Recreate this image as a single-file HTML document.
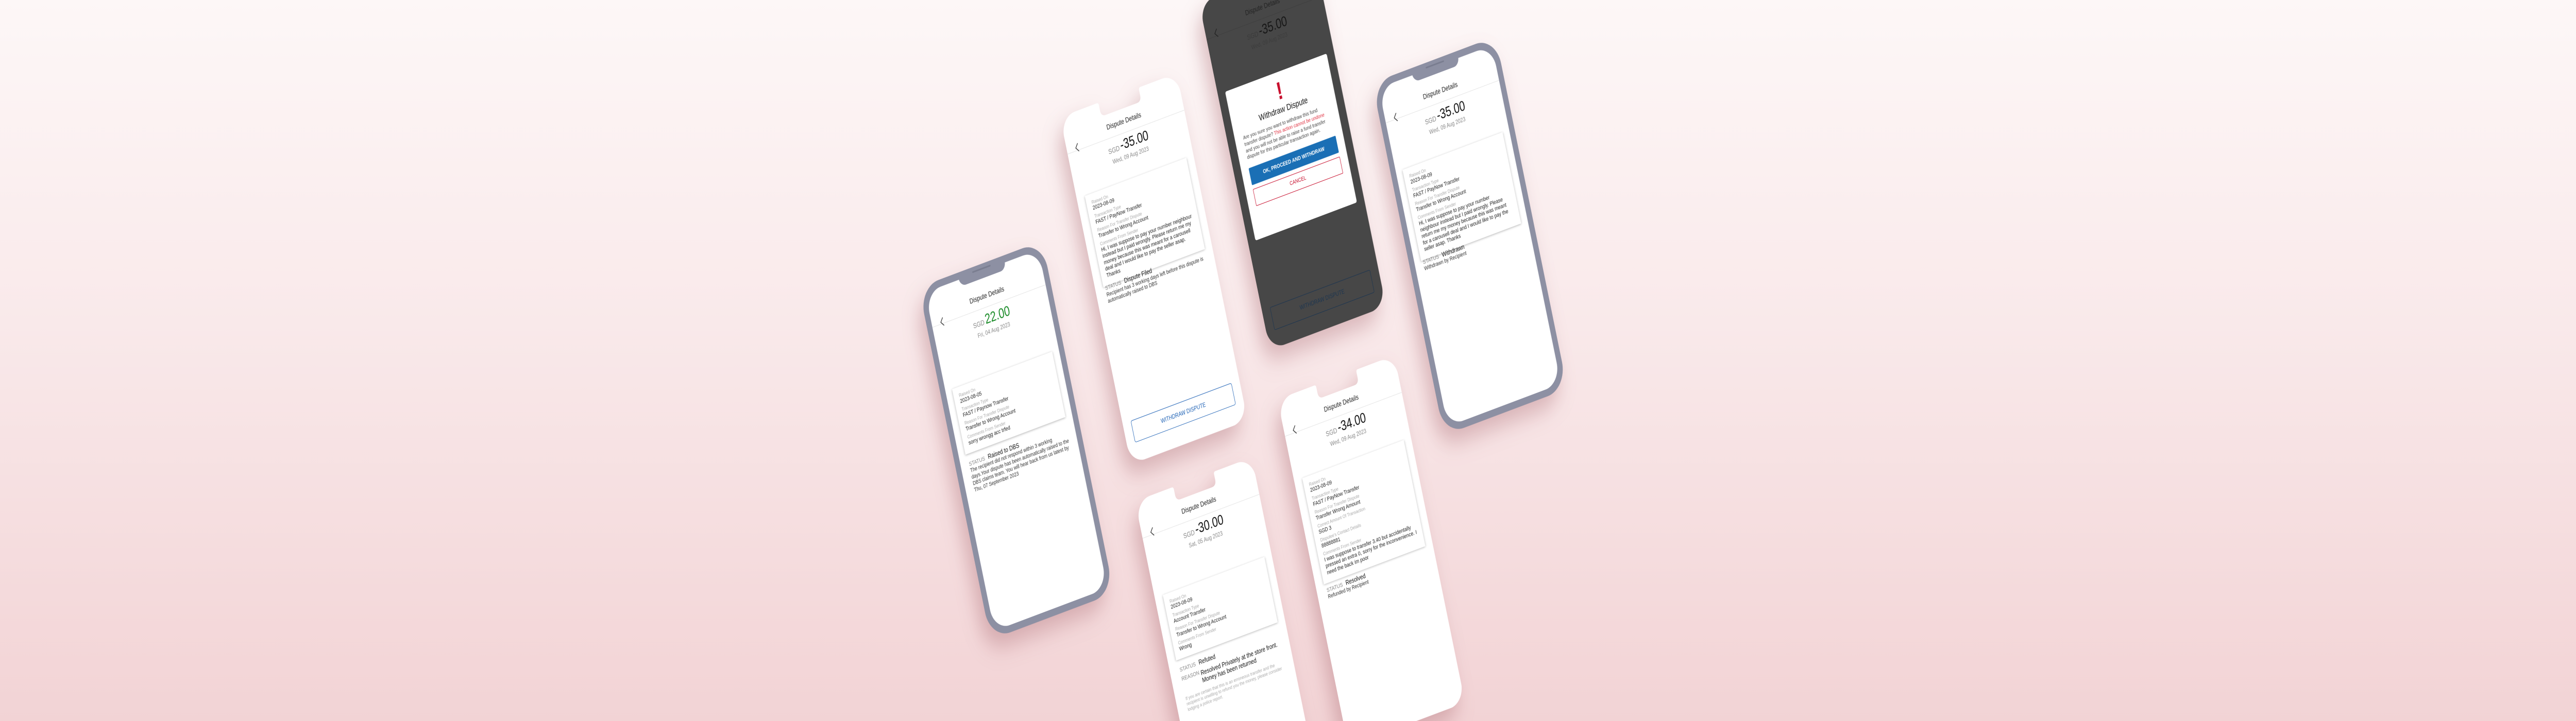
<!DOCTYPE html>
<html><head><meta charset="utf-8"><style>
*{margin:0;padding:0;box-sizing:border-box}
html,body{overflow:hidden;background:#f2d3d5}
#wrap{position:absolute;left:0;top:0;width:6800px;height:1400px;overflow:hidden;transform-origin:0 0;background:linear-gradient(180deg,#fdf7f7 0%,#f9e9ea 45%,#f2d3d5 100%);font-family:"Liberation Sans",sans-serif}
.ph{position:absolute;transform:rotate(-15.5deg);filter:drop-shadow(-18px 22px 22px rgba(165,100,108,.38))}
.wscr{position:absolute;inset:0;background:#fff;clip-path:path("M40,0 H100 Q105,0 105,5 V16 Q105,28 118,28 H202 Q215,28 215,16 V5 Q215,0 220,0 H280 A40 40 0 0 1 320 40 V660 A40 40 0 0 1 280 700 H40 A40 40 0 0 1 0 660 V40 A40 40 0 0 1 40 0 Z");overflow:hidden}
.frame{position:absolute;inset:0;background:#8d90a3;border-radius:54px}
.fscr{position:absolute;left:14px;top:14px;right:14px;bottom:14px;background:#fff;border-radius:42px;overflow:hidden}
.notch{position:absolute;left:50%;top:0;width:126px;height:28px;margin-left:-63px;background:#8d90a3;border-radius:0 0 16px 16px}
.notch:after{content:"";position:absolute;left:38px;top:8px;width:50px;height:3px;border-radius:2px;background:#7a7d90}
.hdr{position:absolute;left:0;right:0;top:44px;text-align:center;font-size:14px;color:#222}
.ln{position:absolute;left:0;right:0;top:74px;height:1px;background:#e4e4e4}
.bk{position:absolute;left:20px;top:58px;width:16px;height:22px}
.amt{position:absolute;left:0;right:0;top:80px;text-align:center;color:#111;font-size:27px}
.amt small{font-size:14px;color:#888;margin-right:3px}
.dt{position:absolute;left:0;right:0;top:114px;text-align:center;font-size:12px;color:#888}
.card{position:absolute;left:22px;right:20px;background:#fff;box-shadow:0 1px 5px rgba(0,0,0,.3);padding:12px 14px 12px}
.lb{font-size:9.5px;color:#aaa;line-height:11px;margin-top:4px}
.lb:first-child{margin-top:0}
.vl{font-size:11.5px;color:#222;line-height:13px}
.st{position:absolute;left:26px;right:18px;font-size:11px;color:#333;line-height:13px}
.st .k{color:#888;font-size:11.5px;display:inline-block;width:52px}
.st .t{font-size:13px;color:#111}
.wbtn{position:absolute;left:22px;right:22px;bottom:38px;height:44px;border:1.5px solid #1a5fb4;border-radius:4px;color:#1a5fb4;text-align:center;line-height:42px;font-size:12px}
</style></head><body><div id="wrap">

<div class="ph" style="left:2514px;top:500px;width:338px;height:710px">
 <div class="frame"></div>
 <div class="fscr">
  <div class="hdr" style="top:40px">Dispute Details</div><div class="ln" style="top:70px"></div>
  <svg class="bk" style="top:56px" viewBox="0 0 16 22"><path d="M11 3 L4 11 L11 19" fill="none" stroke="#333" stroke-width="1.6"/></svg>
  <div class="amt" style="top:78px"><small>SGD</small><span style="color:#178a25">22.00</span></div>
  <div class="dt" style="top:112px">Fri, 04 Aug 2023</div>
  <div class="card" style="top:200px;left:18px;right:18px">
   <div class="lb">Raised On</div><div class="vl">2023-08-05</div>
   <div class="lb">Transaction Type</div><div class="vl">FAST / Paynow Transfer</div>
   <div class="lb">Reason For Transfer Dispute</div><div class="vl">Transfer to Wrong Account</div>
   <div class="lb">Comments From Sender</div><div class="vl">sorry wrongg acc trfed</div>
  </div>
  <div class="st" style="top:345px;left:22px"><span class="k">STATUS</span><span class="t">Raised to DBS</span><br>The recipient did not respond within 3 working days.Your dispute has been automatically raised to the DBS claims team. You will hear back from us latest by Thu, 07 September 2023</div>
 </div>
 <div class="notch"></div>
</div>

<div class="ph" style="left:2886px;top:172px;width:320px;height:700px">
 <div class="wscr">
  <div class="hdr">Dispute Details</div><div class="ln"></div>
  <svg class="bk" viewBox="0 0 16 22"><path d="M11 3 L4 11 L11 19" fill="none" stroke="#333" stroke-width="1.6"/></svg>
  <div class="amt"><small>SGD</small>-35.00</div>
  <div class="dt">Wed, 09 Aug 2023</div>
  <div class="card" style="top:165px">
   <div class="lb">Raised On</div><div class="vl">2023-08-09</div>
   <div class="lb">Transaction Type</div><div class="vl">FAST / PayNow Transfer</div>
   <div class="lb">Reason For Transfer Dispute</div><div class="vl">Transfer to Wrong Account</div>
   <div class="lb">Comments From Sender</div><div class="vl">Hi, I was suppose to pay your number neighbour instead but I paid wrongly. Please return me my money because this was meant for a carousell deal and I would like to pay the seller asap. Thanks</div>
  </div>
  <div class="st" style="top:345px"><span class="k">STATUS</span><span class="t">Dispute Filed</span><br>Recipient has 3 working days left before this dispute is automatically raised to DBS</div>
  <div class="wbtn">WITHDRAW DISPUTE</div>
 </div>
</div>

<div class="ph" style="left:3253px;top:-50px;width:318px;height:700px">
 <div style="position:absolute;inset:0;background:#474747;border-radius:40px;overflow:hidden">
  <div class="hdr" style="color:#222">Dispute Details</div>
  <div class="ln" style="background:#3f3f3f"></div>
  <svg class="bk" viewBox="0 0 16 22"><path d="M11 3 L4 11 L11 19" fill="none" stroke="#222" stroke-width="1.6"/></svg>
  <div class="amt" style="color:#161616"><small style="color:#3a3a3a">SGD</small>-35.00</div>
  <div class="dt" style="color:#3c3c3c">Wed, 09 Aug 2023</div>
  <div style="position:absolute;left:20px;right:20px;top:185px;height:300px;background:#fff;border-radius:4px;text-align:center">
   <div style="color:#c8102e;font-size:48px;font-weight:bold;line-height:48px;margin-top:14px">!</div>
   <div style="font-size:17px;color:#111;margin-top:2px">Withdraw Dispute</div>
   <div style="font-size:10.5px;color:#444;line-height:13px;margin:10px 22px 0;text-align:left">Are you sure you want to withdraw this fund transfer dispute? <span style="color:#e03040">This action cannot be undone</span> and you will not be able to raise a fund transfer dispute for this particular transaction again.</div>
   <div style="margin:14px 20px 0;height:34px;background:#1a6fb5;color:#fff;font-size:11px;font-weight:bold;line-height:34px;border-radius:2px">OK, PROCEED AND WITHDRAW</div>
   <div style="margin:8px 20px 0;height:34px;border:1.5px solid #c8102e;color:#c8102e;font-size:11px;line-height:31px;border-radius:2px">CANCEL</div>
  </div>
  <div style="position:absolute;left:22px;right:22px;bottom:34px;height:46px;border:1.5px solid #1c3550;color:#1c3550;text-align:center;line-height:43px;font-size:12px;border-radius:3px">WITHDRAW DISPUTE</div>
 </div>
</div>

<div class="ph" style="left:3711px;top:103px;width:338px;height:710px">
 <div class="frame"></div>
 <div class="fscr">
  <div class="hdr" style="top:40px">Dispute Details</div><div class="ln" style="top:70px"></div>
  <svg class="bk" style="top:56px" viewBox="0 0 16 22"><path d="M11 3 L4 11 L11 19" fill="none" stroke="#333" stroke-width="1.6"/></svg>
  <div class="amt" style="top:78px"><small>SGD</small>-35.00</div>
  <div class="dt" style="top:112px">Wed, 09 Aug 2023</div>
  <div class="card" style="top:170px;left:18px;right:18px">
   <div class="lb">Raised On</div><div class="vl">2023-08-09</div>
   <div class="lb">Transaction Type</div><div class="vl">FAST / PayNow Transfer</div>
   <div class="lb">Reason For Transfer Dispute</div><div class="vl">Transfer to Wrong Account</div>
   <div class="lb">Comments From Sender</div><div class="vl">Hi, I was suppose to pay your number neighbour instead but I paid wrongly. Please return me my money because this was meant for a carousell deal and I would like to pay the seller asap. Thanks</div>
  </div>
  <div class="st" style="top:350px;left:22px"><span class="k">STATUS</span><span class="t">Withdrawn</span><br>Withdrawn by Recipient</div>
 </div>
 <div class="notch"></div>
</div>

<div class="ph" style="left:3084px;top:918px;width:320px;height:700px">
 <div class="wscr">
  <div class="hdr">Dispute Details</div><div class="ln"></div>
  <svg class="bk" viewBox="0 0 16 22"><path d="M11 3 L4 11 L11 19" fill="none" stroke="#333" stroke-width="1.6"/></svg>
  <div class="amt"><small>SGD</small>-30.00</div>
  <div class="dt">Sat, 05 Aug 2023</div>
  <div class="card" style="top:195px">
   <div class="lb">Raised On</div><div class="vl">2023-08-09</div>
   <div class="lb">Transaction Type</div><div class="vl">Account Transfer</div>
   <div class="lb">Reason For Transfer Dispute</div><div class="vl">Transfer to Wrong Account</div>
   <div class="lb">Comments From Sender</div><div class="vl">Wrong</div>
  </div>
  <div class="st" style="top:340px"><span class="k">STATUS</span><span class="t">Refuted</span></div>
  <div class="st" style="top:360px"><span class="k" style="float:left">REASON</span><div style="margin-left:52px;font-size:13px;color:#111;line-height:15px">Resolved Privately at the store front. Money has been returned</div></div>
  <div class="st" style="top:400px;font-size:9.5px;color:#aaa;line-height:11px">If you are certain that this is an erroneous transfer and the recipient is unwilling to refund you the money, please consider lodging a police report.</div>
 </div>
</div>

<div class="ph" style="left:3460px;top:720px;width:320px;height:700px">
 <div class="wscr">
  <div class="hdr">Dispute Details</div><div class="ln"></div>
  <svg class="bk" viewBox="0 0 16 22"><path d="M11 3 L4 11 L11 19" fill="none" stroke="#333" stroke-width="1.6"/></svg>
  <div class="amt"><small>SGD</small>-34.00</div>
  <div class="dt">Wed, 09 Aug 2023</div>
  <div class="card" style="top:165px">
   <div class="lb">Raised On</div><div class="vl">2023-08-09</div>
   <div class="lb">Transaction Type</div><div class="vl">FAST / PayNow Transfer</div>
   <div class="lb">Reason For Transfer Dispute</div><div class="vl">Transfer Wrong Amount</div>
   <div class="lb">Correct Amount Of Transaction</div><div class="vl">SGD 3</div>
   <div class="lb">Disputee's Contact Details</div><div class="vl">88888881</div>
   <div class="lb">Comments From Sender</div><div class="vl">I was suppose to transfer 3.40 but accidentally pressed an extra 0, sorry for the inconvenience. I need the back im poor</div>
  </div>
  <div class="st" style="top:385px"><span class="k">STATUS</span><span class="t">Resolved</span><br>Refunded by Recipient</div>
 </div>
</div>

</div>
<script>
(function(){
 var w=window.innerWidth||document.documentElement.clientWidth||6800;
 var h=window.innerHeight||document.documentElement.clientHeight||1400;
 var sx=w/6800, sy=h/1400;
 var wr=document.getElementById('wrap');
 wr.style.transform='scale('+sx+','+sy+')';
 document.documentElement.style.height=h+'px';document.body.style.height=h+'px';
 document.documentElement.style.width=w+'px';document.body.style.width=w+'px';
})();
</script>
</body></html>
